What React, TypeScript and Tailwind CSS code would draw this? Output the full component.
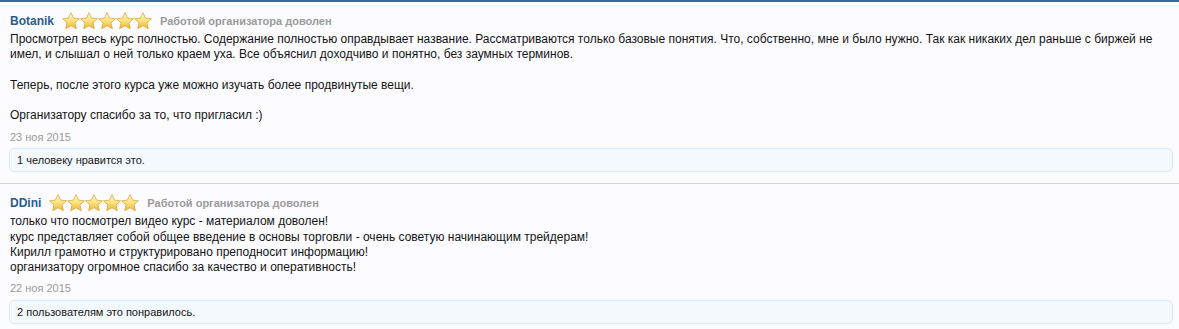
import React from "react";

type Review = {
  author: string;
  verdict: string;
  text: string;
  date: string;
  likes: string;
};

const reviews: Review[] = [
  {
    author: "Botanik",
    verdict: "Работой организатора доволен",
    text:
      "Просмотрел весь курс полностью. Содержание полностью оправдывает название. Рассматриваются только базовые понятия. Что, собственно, мне и было нужно. Так как никаких дел раньше с биржей не имел, и слышал о ней только краем уха. Все объяснил доходчиво и понятно, без заумных терминов.\n\nТеперь, после этого курса уже можно изучать более продвинутые вещи.\n\nОрганизатору спасибо за то, что пригласил :)",
    date: "23 ноя 2015",
    likes: "1 человеку нравится это.",
  },
  {
    author: "DDini",
    verdict: "Работой организатора доволен",
    text:
      "только что посмотрел видео курс - материалом доволен!\nкурс представляет собой общее введение в основы торговли - очень советую начинающим трейдерам!\nКирилл грамотно и структурировано преподносит информацию!\nорганизатору огромное спасибо за качество и оперативность!",
    date: "22 ноя 2015",
    likes: "2 пользователям это понравилось.",
  },
];

function Star() {
  return (
    <svg width="18" height="18" viewBox="1 1 22 22" className="shrink-0">
      <defs>
        <linearGradient id="starFill" x1="0" y1="0" x2="0" y2="1">
          <stop offset="0%" stopColor="#fffbd6" />
          <stop offset="50%" stopColor="#fbe27a" />
          <stop offset="100%" stopColor="#efb53a" />
        </linearGradient>
      </defs>
      <path
        d="M12 1.8l3.1 6.7 7.3.8-5.5 4.9 1.6 7.3L12 17.8l-6.5 3.7 1.6-7.3-5.5-4.9 7.3-.8z"
        fill="url(#starFill)"
        stroke="#d9a232"
        strokeWidth="0.9"
        strokeLinejoin="round"
      />
    </svg>
  );
}

function ReviewItem({ review, last }: { review: Review; last?: boolean }) {
  return (
    <div className={`pl-[10px] pr-[6px] pt-[9px] pb-[11px] ${last ? "" : "border-b border-[#c6d7e6]"}`}>
      <div className="flex items-center h-[20px]">
        <span className="text-[12px] font-bold text-[#2a5c8c]">{review.author}</span>
        <div className="flex ml-[8px]">
          {[0, 1, 2, 3, 4].map((i) => (
            <Star key={i} />
          ))}
        </div>
        <span className="ml-[8px] text-[11px] font-bold text-[#9a9a9a]">{review.verdict}</span>
      </div>
      <div className="mt-[1px] whitespace-pre-line text-[12px] leading-[15.3px] text-[#141414]">
        {review.text}
      </div>
      <div className="mt-[5px] text-[11px] text-[#9a9a9a]">{review.date}</div>
      <div className="mt-[3px] -ml-[1px] rounded-[5px] border border-[#d8e8f5] bg-[#f4f9fd] px-[7px] py-[4px] text-[11px] leading-[14px] text-[#141414]">
        {review.likes}
      </div>
    </div>
  );
}

export default function App() {
  return (
    <div className="w-[1179px] h-[329px] overflow-hidden bg-[#fcfcff] border-t-2 border-[#2f6c9c] font-['Liberation_Sans',Arial,sans-serif]">
      {reviews.map((r, i) => (
        <ReviewItem key={r.author} review={r} last={i === reviews.length - 1} />
      ))}
    </div>
  );
}
